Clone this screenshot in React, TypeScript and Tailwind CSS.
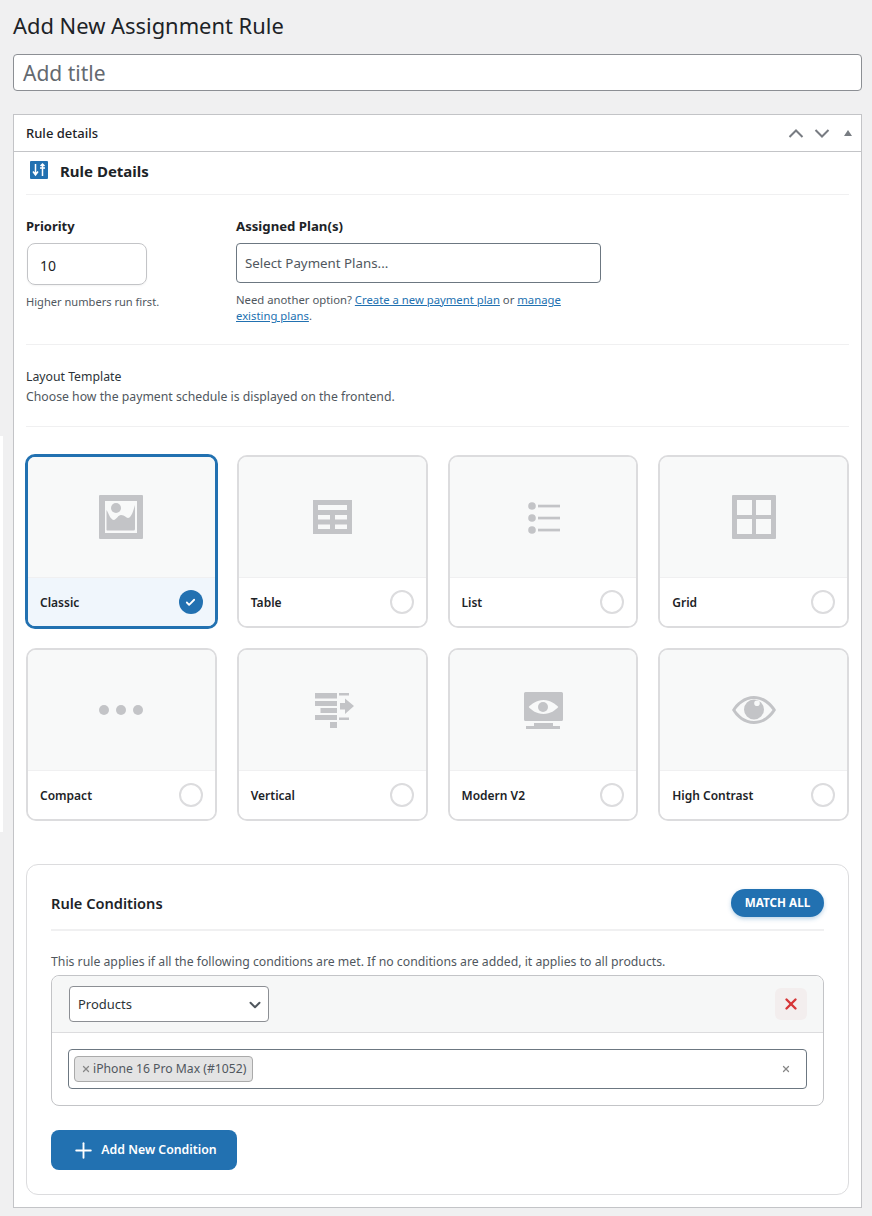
import { Check, ChevronDown, Plus, X } from "lucide-react"

const font = "font-['Noto_Sans','Open_Sans',sans-serif]"

function ImageIcon() {
    return (
        <svg width="44" height="44" viewBox="0 0 44 44" fill="#c3c4c7">
            <path fillRule="evenodd" d="M1 0h42a1 1 0 0 1 1 1v42a1 1 0 0 1-1 1H1a1 1 0 0 1-1-1V1a1 1 0 0 1 1-1zM6 6v32h32V6z" />
            <circle cx="17" cy="13" r="5" />
            <path d="M7.500 15c2 3 4 10 7.500 10 3-1 4-5 7-5 4 0 5 3 7 3 3 0 5-6 7-13v24a1.500 1.500 0 0 1-1.500 1.500H9A1.500 1.500 0 0 1 7.500 35z" />
        </svg>
    )
}

function TableIcon() {
    return (
        <svg width="39" height="34" viewBox="0 0 39 34" fill="#c3c4c7">
            <path fillRule="evenodd" d="M0 0h39v34H0zM5 5v5h29V5zM5 15v4.500h12V15zM22 15v4.500h12V15zM5 24.500V29h12v-4.500zM22 24.500V29h12v-4.500z" />
        </svg>
    )
}

function ListIcon() {
    return (
        <svg width="32" height="32" viewBox="0 0 32 32" fill="#c3c4c7" className="mt-[2px] ml-[2px]">
            <circle cx="4" cy="4" r="3.800" />
            <circle cx="4" cy="16" r="3.800" />
            <circle cx="4" cy="28" r="3.800" />
            <rect x="10" y="2.700" width="22" height="2.700" />
            <rect x="10" y="14.700" width="22" height="2.700" />
            <rect x="10" y="26.700" width="22" height="2.700" />
        </svg>
    )
}

function GridIcon() {
    return (
        <svg width="44" height="44" viewBox="0 0 44 44" fill="#c3c4c7">
            <path fillRule="evenodd" d="M1 0h42a1 1 0 0 1 1 1v42a1 1 0 0 1-1 1H1a1 1 0 0 1-1-1V1a1 1 0 0 1 1-1zM5 5v15h15V5zM24 5v15h15V5zM5 24v15h15V24zM24 24v15h15V24z" />
        </svg>
    )
}

function DotsIcon() {
    return (
        <svg width="44" height="10" viewBox="0 0 44 10" fill="#c3c4c7">
            <circle cx="5" cy="5" r="5" />
            <circle cx="22" cy="5" r="5" />
            <circle cx="39" cy="5" r="5" />
        </svg>
    )
}

function VerticalIcon() {
    return (
        <svg width="39" height="35" viewBox="0 0 39 35" fill="#c3c4c7" className="ml-[4px]">
            <rect x="0" y="0" width="22" height="5.500" />
            <rect x="24" y="0" width="10" height="2.500" />
            <rect x="0" y="8" width="22" height="5" />
            <rect x="5.500" y="15" width="16.500" height="5" />
            <rect x="0" y="22" width="22" height="5" />
            <rect x="24" y="24.500" width="10" height="2.500" />
            <rect x="15" y="29" width="7" height="6" />
            <path d="M25 10h5V5.500l9 7.500-9 8V16.500h-5z" />
        </svg>
    )
}

function MonitorIcon() {
    return (
        <svg width="39" height="37" viewBox="0 0 39 37" fill="#c3c4c7" className="mt-[1px] ml-[1px]">
            <path fillRule="evenodd" d="M1.500 0h36A1.500 1.500 0 0 1 39 1.500v26a1.500 1.500 0 0 1-1.500 1.500h-36A1.500 1.500 0 0 1 0 27.500v-26A1.500 1.500 0 0 1 1.500 0zM19.500 8C12.500 8 7.500 12 4.700 15c2.800 3 7.800 7 14.800 7s12-4 14.800-7c-2.800-3-7.800-7-14.800-7z" />
            <circle cx="19" cy="15" r="5" />
            <rect x="10" y="31" width="19" height="3" />
            <rect x="2" y="34" width="34" height="3" />
        </svg>
    )
}

function EyeIcon() {
    return (
        <svg width="44" height="28" viewBox="0 0 44 28" fill="#c3c4c7">
            <path fillRule="evenodd" d="M22 0c10 0 18 7 22 14-4 7-12 14-22 14S4 21 0 14C4 7 12 0 22 0zM22 3C13 3 7 9 3.500 14 7 19 13 25 22 25s15-6 18.500-11C37 9 31 3 22 3z" />
            <path fillRule="evenodd" d="M22 3.500a10 10 0 1 1 0 20 10 10 0 0 1 0-20zM25 4.500a2.800 2.800 0 1 0 0 5.600 2.800 2.800 0 0 0 0-5.600z" />
        </svg>
    )
}

const templates = [
    { name: "Classic", icon: <ImageIcon />, selected: true },
    { name: "Table", icon: <TableIcon /> },
    { name: "List", icon: <ListIcon /> },
    { name: "Grid", icon: <GridIcon /> },
    { name: "Compact", icon: <DotsIcon /> },
    { name: "Vertical", icon: <VerticalIcon /> },
    { name: "Modern V2", icon: <MonitorIcon /> },
    { name: "High Contrast", icon: <EyeIcon /> },
]

function TemplateCard({ name, icon, selected }: { name: string; icon: React.ReactNode; selected?: boolean }) {
    return (
        <div className={`flex flex-col overflow-hidden rounded-[10px] ${selected ? "-m-px h-[175px] border-[3px] border-[#2271b1]" : "h-[173px] border-[2px] border-[#dcdcde]"}`}>
            <div className="flex flex-1 items-center justify-center border-b border-[#f0f0f1] bg-[#f8f9f9]">{icon}</div>
            <div className={`flex h-[48px] shrink-0 items-center justify-between px-3 ${selected ? "bg-[#f0f6fc]" : "bg-white"}`}>
                <span className="pt-[2px] text-[12px] font-semibold text-[#1d2327]">{name}</span>
                {selected ? (
                    <span className="flex size-6 items-center justify-center rounded-full bg-[#2271b1]">
                        <Check size={11} strokeWidth={4} className="text-white" />
                    </span>
                ) : (
                    <span className="size-6 rounded-full border-2 border-[#dcdcde] bg-white" />
                )}
            </div>
        </div>
    )
}

export default function App() {
    return (
        <div className={`${font} relative min-h-[1216px] bg-[#f0f0f1] pt-[11px] pr-[10px] pl-[13px] text-[#1d2327]`}>
            {/* 画面端の白い帯 */}
            <div className="absolute top-[436px] left-0 h-[396px] w-[3px] bg-white" />

            <h1 className="h-[30px] text-[21.900px] leading-[30px] font-normal">Add New Assignment Rule</h1>
            <div className="mt-[13px] flex h-[37px] items-center rounded border border-[#8c8f94] bg-white px-[9px] pt-[3px] text-[21px] text-[#646970]">
                Add title
            </div>

            <div className="mt-[23px] h-[1094px] border border-[#c3c4c7] bg-white">
                <div className="flex h-[37px] items-center justify-between border-b border-[#c3c4c7] pr-[9px] pl-3">
                    <span className="pt-[1px] text-[13px] font-medium">Rule details</span>
                    <div className="flex items-center gap-[10px]">
                        <svg width="16" height="9" viewBox="0 0 16 9" fill="none" stroke="#787c82" strokeWidth="2"><path d="M1.500 8 8 1.500 14.500 8" /></svg>
                        <svg width="16" height="9" viewBox="0 0 16 9" fill="none" stroke="#787c82" strokeWidth="2"><path d="M1.500 1 8 7.500 14.500 1" /></svg>
                        <span className="ml-[4px] size-0 border-x-[4px] border-b-[6px] border-x-transparent border-b-[#787c82]" />
                    </div>
                </div>

                <div className="px-3">
                    <div className="flex h-[43px] items-start border-b border-[#f0f0f1] pt-[8px]">
                        <svg width="18" height="18" viewBox="0 0 18 18" className="mt-[1px] ml-[4px]">
                            <rect width="18" height="18" rx="1" fill="#2271b1" />
                            <path d="M5.500 3v10M3 10.500 5.500 14 8 10.500M12.500 15V4M10 7h5M10.500 5 12.500 3 14.500 5" stroke="#fff" strokeWidth="1.500" fill="none" />
                        </svg>
                        <span className="ml-3 text-[15px] leading-[22px] font-bold">Rule Details</span>
                    </div>

                    <div className="flex h-[150px] items-start border-b border-[#f0f0f1] pt-[22px]">
                        <div className="w-[210px]">
                            <div className="text-[13px] leading-[18px] font-bold">Priority</div>
                            <div className="mt-[8px] ml-[1px] flex h-[42px] w-[120px] items-center rounded-lg border border-[#c3c4c7] px-[12px] pt-[2px] text-[14px] shadow-[0_1px_2px_rgba(0,0,0,0.05)]">10</div>
                            <p className="mt-[9px] text-[11.100px] leading-[16px] text-[#50575e]">Higher numbers run first.</p>
                        </div>
                        <div className="w-[365px]">
                            <div className="text-[13.200px] leading-[18px] font-bold">Assigned Plan(s)</div>
                            <div className="mt-[8px] flex h-[40px] items-center rounded border border-[#6c7781] px-2 pt-[1px] text-[13.300px] text-[#50575e]">Select Payment Plans...</div>
                            <p className="mt-[9px] w-[340px] text-[11.300px] leading-[16px] text-[#50575e]">
                                Need another option? <a className="text-[#2271b1] underline">Create a new payment plan</a> or <a className="text-[#2271b1] underline">manage existing plans</a>.
                            </p>
                        </div>
                    </div>

                    <div className="flex h-[82px] flex-col border-b border-[#f0f0f1] pt-[22px] text-[12.250px] leading-[20px] text-[#50575e]">
                        <span className="text-[#2c3338]">Layout Template</span>
                        <span>Choose how the payment schedule is displayed on the frontend.</span>
                    </div>

                    <div className="mt-[28px] grid grid-cols-4 gap-[20px]">
                        {templates.map((t) => (
                            <TemplateCard key={t.name} {...t} />
                        ))}
                    </div>

                    <div className="mt-[43px] rounded-xl border border-[#dcdcde] px-6 pt-6 pb-6">
                        <div className="flex h-[42px] items-start justify-between border-b-2 border-[#f0f0f1]">
                            <span className="pt-[2px] text-[14.600px] leading-[24px] font-semibold">Rule Conditions</span>
                            <span className="flex h-[28px] w-[93px] items-center justify-center rounded-full bg-[#2271b1] text-[11.700px] font-bold text-white shadow-[0_2px_4px_rgba(34,113,177,0.3)]">MATCH ALL</span>
                        </div>
                        <p className="mt-[20px] text-[12.250px] leading-[22px] text-[#50575e]">This rule applies if all the following conditions are met. If no conditions are added, it applies to all products.</p>

                        <div className="mt-[2px] rounded-lg border border-[#c3c4c7]">
                            <div className="flex h-[57px] items-center justify-between rounded-t-lg border-b border-[#dcdcde] bg-[#f6f7f7] pr-4 pl-[17px]">
                                <div className="flex h-[36px] w-[200px] items-center justify-between rounded border border-[#8c8f94] bg-white pr-[4px] pl-2 pt-[1px] text-[13px] text-[#2c3338]">
                                    Products
                                    <ChevronDown size={18} strokeWidth={2.600} className="text-[#50575e]" />
                                </div>
                                <span className="flex size-8 items-center justify-center rounded-md bg-[#f3eeee]">
                                    <X size={18} strokeWidth={3.200} className="text-[#d63638]" />
                                </span>
                            </div>
                            <div className="flex h-[72px] items-start px-4 pt-4">
                                <div className="flex h-[40px] w-full items-center justify-between rounded border border-[#6c7781] pr-[15px] pl-[5px]">
                                    <span className="flex h-[26px] items-center gap-[2px] rounded border border-[#aaa] bg-[#e4e4e4] pr-[6px] pl-[6px] text-[12.200px] text-[#50575e]">
                                        <X size={10} strokeWidth={3} className="text-[#888]" />
                                        iPhone 16 Pro Max (#1052)
                                    </span>
                                    <X size={10} strokeWidth={3} className="text-[#888]" />
                                </div>
                            </div>
                        </div>

                        <div className="mt-6 flex h-[40px] w-[186px] items-center justify-center gap-[5px] rounded-lg bg-[#2271b1] pt-[1px] text-[12.300px] font-semibold text-white">
                            <Plus size={25} strokeWidth={1.800} />
                            Add New Condition
                        </div>
                    </div>
                </div>
            </div>
        </div>
    )
}
